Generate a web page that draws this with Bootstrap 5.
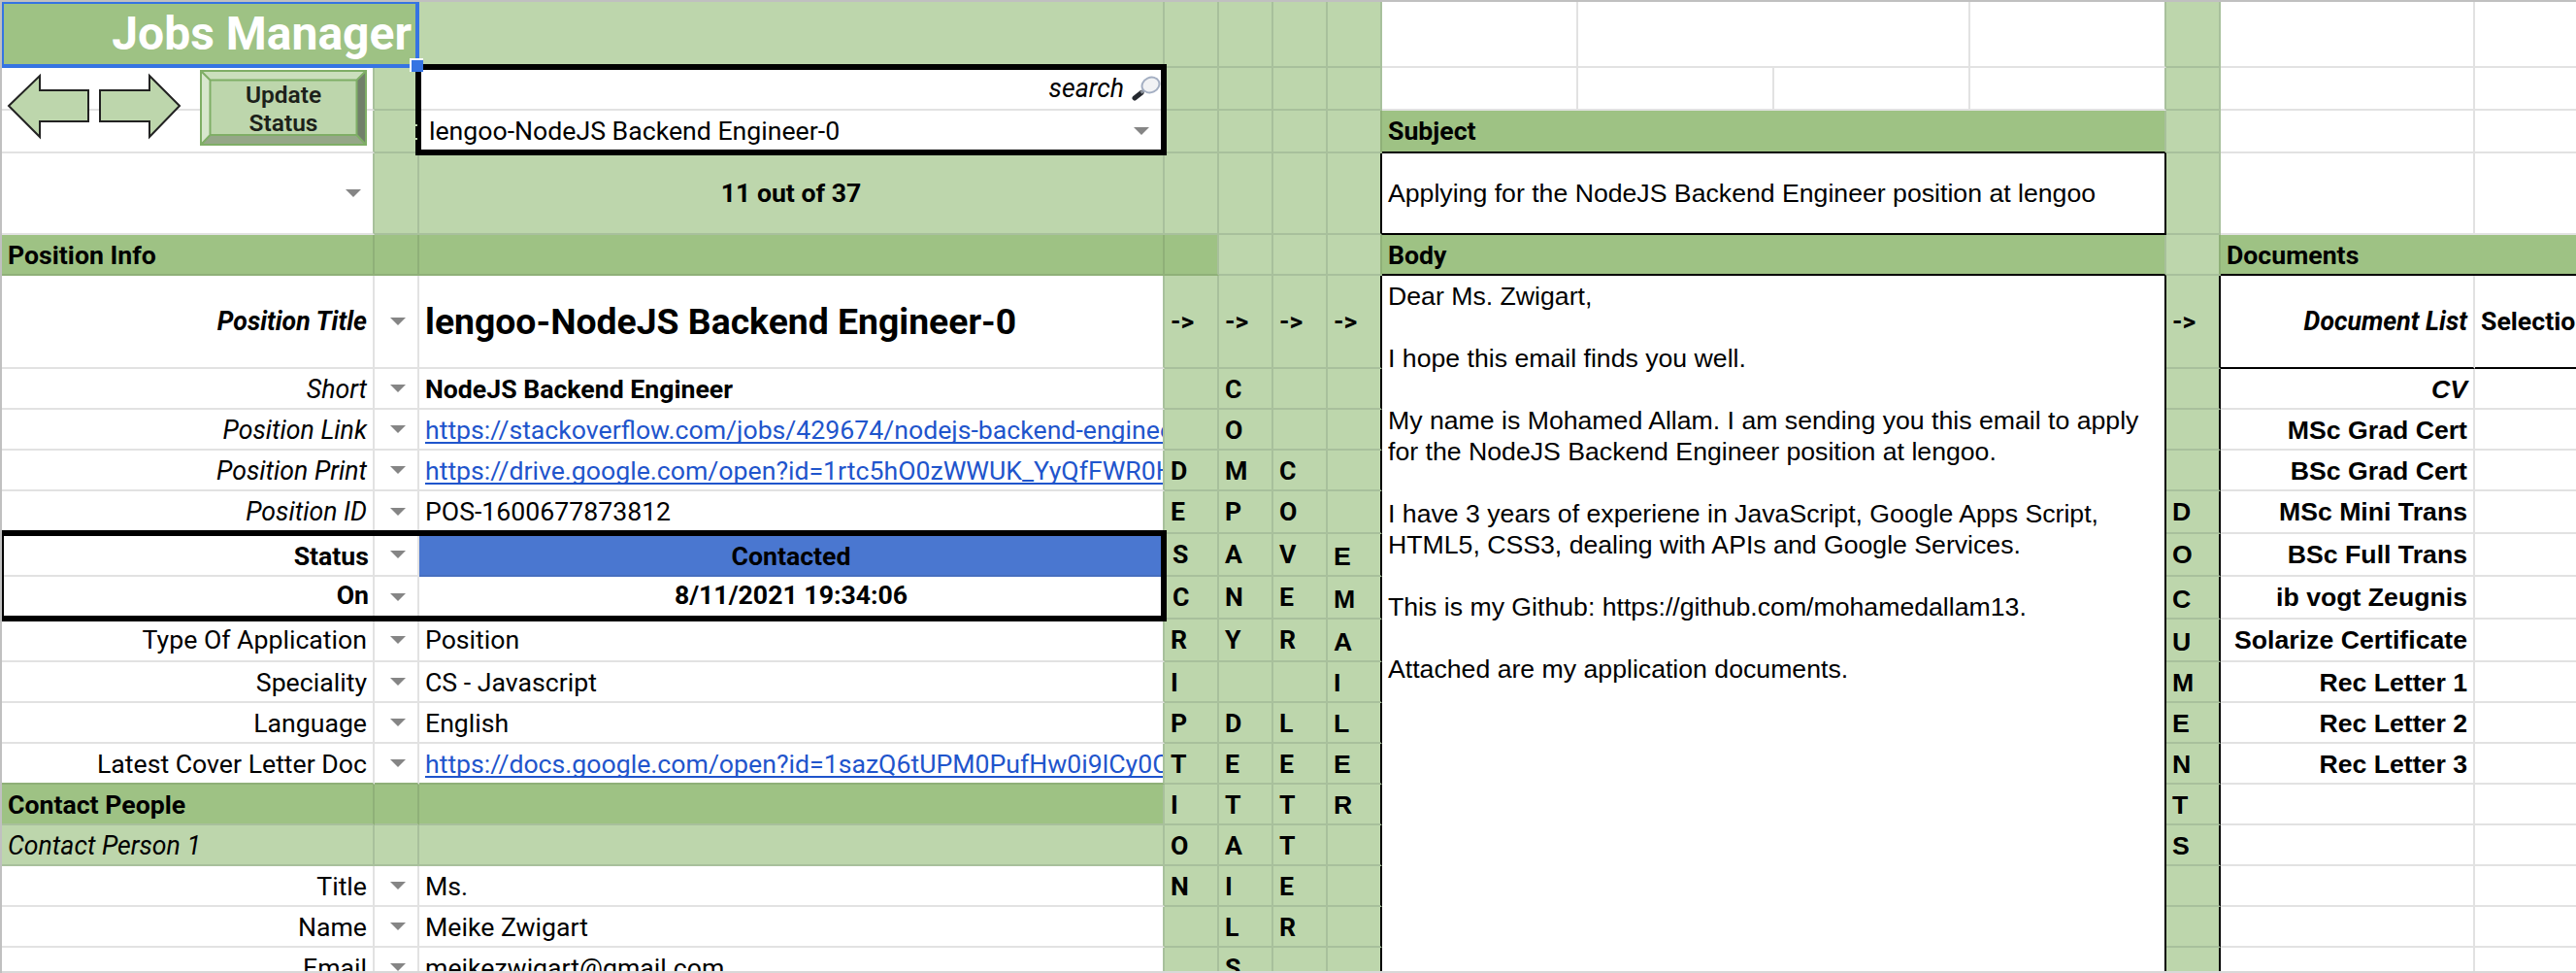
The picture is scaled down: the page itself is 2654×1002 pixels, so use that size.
<!DOCTYPE html>
<html lang="en">
<head>
<meta charset="utf-8">
<title>Jobs Manager</title>
<link href="https://cdn.jsdelivr.net/npm/bootstrap@5.3.0/dist/css/bootstrap.min.css" rel="stylesheet">
<script src="https://cdn.jsdelivr.net/npm/bootstrap@5.3.0/dist/js/bootstrap.bundle.min.js"></script>
<style>
:root{--lg:#bdd6ac;--lgl:#a8c09c;--dg:#9ec284;--dgl:#8fb078;--gl:#e2e2e2}
body{margin:0;background:#fff;color:#000;font-family:Roboto,sans-serif;font-size:26.67px;line-height:32px}
.sheet-wrap{width:2654px;height:1002px;border-top:2px solid #c0c0c0;border-left:2px solid #c0c0c0}
.sheet-wrap::after{content:"";position:absolute;left:0;right:0;bottom:0;height:2px;background:#d8d8d8}
.sheet{width:2654px;table-layout:fixed;border-collapse:separate;border-spacing:0}
.sheet td{padding:0 6px;height:0;border:0 solid var(--gl);border-width:0 2px 2px 0;vertical-align:middle;white-space:nowrap;overflow:hidden;background:#fff}
.sheet .r42 td{padding-top:2px}
.sheet td.l{background:var(--lg);border-color:var(--lgl)}
.sheet td.d{background:var(--dg);border-color:var(--dgl)}
.sheet td.rl{border-right-color:var(--lgl)}
.sheet td.rd{border-right-color:var(--dgl)}
.sheet td.rk{border-right-color:#000}
.sheet td.bl{border-bottom-color:var(--lgl)}
.sheet td.bd{border-bottom-color:var(--dgl)}
.sheet td.bk{border-bottom-color:#000}
.r42{height:42px}.r44{height:44px}.r68{height:68px}.r84{height:84px}.r96{height:96px}
.arial{font-family:"Liberation Sans",Arial,sans-serif}
.ttl{font-size:48px;line-height:56px;color:#fff}
.big{font-size:37.33px;line-height:44px}
.sheet td.pick{padding-right:12px;padding-top:0}
.tri{display:inline-block;width:0;height:0;border:8px solid transparent;border-top-color:#858585;border-bottom:0;vertical-align:middle;flex:none}
.pick .tri{display:block;margin-left:auto}
.lens{margin-right:-4px}
.sheet a{color:#1f55cc;text-decoration:underline;text-decoration-thickness:2px;text-underline-offset:3px;text-decoration-skip-ink:none}
.sheet td.status-fill{background:#4a77d0;border-bottom-color:#466fbf}
.sheet td.mail{vertical-align:top;padding-top:5px;white-space:pre-line}
.sheet td.px4{padding-right:4px}
.sheet td.px8{padding-left:8px}
.sheet td.dn{padding-top:3px}
.sheet td.up{padding-bottom:4px}
.frame{position:absolute;border:6px solid #000;pointer-events:none}
.f-search{left:428px;top:66px;width:774px;height:94px}
.f-status{left:2px;top:546px;width:1200px;height:94px;border-left-width:2px}
.sel{position:absolute;left:2px;top:2px;width:430px;height:68px;border:2px solid #3574e3;border-right-width:4px;border-bottom-width:4px}
.handle{position:absolute;left:422px;top:60px;width:14px;height:14px;background:#3574e3;border:2px solid #fff;border-width:2px 0 0 2px}
.draw{position:absolute;left:0;top:70px}
</style>
</head>
<body class="overflow-hidden">
<main class="sheet-wrap position-relative overflow-hidden">
<table class="sheet">
<colgroup><col style="width:384px"><col style="width:46px"><col style="width:768px"><col style="width:56px"><col style="width:56px"><col style="width:56px"><col style="width:56px"><col style="width:202px"><col style="width:202px"><col style="width:202px"><col style="width:202px"><col style="width:56px"><col style="width:262px"><col style="width:106px"></colgroup>
<tbody>
<tr class="r68"><td colspan="2" class="d ttl fw-bold text-end">Jobs Manager</td><td class="l"></td><td class="l"></td><td class="l"></td><td class="l"></td><td class="l"></td><td></td><td colspan="2"></td><td class="rl"></td><td class="l"></td><td></td><td></td></tr>
<tr class="r44"><td class="rl"></td><td class="l"></td><td><div class="d-flex justify-content-end align-items-center fst-italic">search<svg class="lens ms-2" width="30" height="26" viewBox="0 0 30 26"><path d="M3 23L10 17.500" stroke="#24282f" stroke-width="5" stroke-linecap="round"/><path d="M9.500 17.500L12.500 15" stroke="#8b919c" stroke-width="3"/><ellipse cx="19.500" cy="9.500" rx="9.200" ry="7.600" transform="rotate(-25 19.500 9.500)" fill="#f1f2f4" stroke="#a3aec2" stroke-width="2"/></svg></div></td><td class="l"></td><td class="l"></td><td class="l"></td><td class="l"></td><td></td><td></td><td></td><td class="rl"></td><td class="l"></td><td></td><td></td></tr>
<tr class="r44"><td class="rl"></td><td class="l"></td><td><div class="d-flex align-items-center justify-content-between ps-1 pe-2"><span>lengoo-NodeJS Backend Engineer-0</span><i class="tri"></i></div></td><td class="l"></td><td class="l"></td><td class="l"></td><td class="l rd"></td><td colspan="4" class="d fw-bold bk rl">Subject</td><td class="l"></td><td></td><td></td></tr>
<tr class="r84"><td class="rl pick"><i class="tri"></i></td><td class="l"></td><td class="l text-center fw-bold">11 out of 37</td><td class="l"></td><td class="l"></td><td class="l"></td><td class="l rk"></td><td colspan="4" class="arial bk rk">Applying for the NodeJS Backend Engineer position at lengoo</td><td class="l"></td><td></td><td></td></tr>
<tr class="r42"><td class="d fw-bold">Position Info</td><td class="d"></td><td class="d"></td><td class="d rl"></td><td class="l"></td><td class="l"></td><td class="l rd"></td><td colspan="4" class="d fw-bold bk rl">Body</td><td class="l rd"></td><td colspan="2" class="d fw-bold bk">Documents</td></tr>
<tr class="r96"><td class="text-end fw-bold fst-italic">Position Title</td><td class="pick"><i class="tri"></i></td><td class="rl big fw-bold">lengoo-NodeJS Backend Engineer-0</td><td class="l fw-bold">-&gt;</td><td class="l fw-bold">-&gt;</td><td class="l fw-bold">-&gt;</td><td class="l fw-bold rk">-&gt;</td><td colspan="4" rowspan="16" class="arial mail rk">Dear Ms. Zwigart,

I hope this email finds you well.

My name is Mohamed Allam. I am sending you this email to apply
for the NodeJS Backend Engineer position at lengoo.

I have 3 years of experiene in JavaScript, Google Apps Script,
HTML5, CSS3, dealing with APIs and Google Services.

This is my Github: https://github.com/mohamedallam13.

Attached are my application documents.</td><td class="l fw-bold rk">-&gt;</td><td class="text-end fw-bold fst-italic bk">Document List</td><td class="fw-bold bk">Selection</td></tr>
<tr class="r42"><td class="text-end fst-italic">Short</td><td class="pick"><i class="tri"></i></td><td class="rl fw-bold">NodeJS Backend Engineer</td><td class="l"></td><td class="l fw-bold">C</td><td class="l"></td><td class="l rk"></td><td class="l rk"></td><td class="arial text-end fw-bold fst-italic">CV</td><td></td></tr>
<tr class="r42"><td class="text-end fst-italic">Position Link</td><td class="pick"><i class="tri"></i></td><td class="rl"><a href="#">https://stackoverflow.com/jobs/429674/nodejs-backend-engineer</a></td><td class="l"></td><td class="l fw-bold">O</td><td class="l"></td><td class="l rk"></td><td class="l rk"></td><td class="arial text-end fw-bold">MSc Grad Cert</td><td></td></tr>
<tr class="r42"><td class="text-end fst-italic">Position Print</td><td class="pick"><i class="tri"></i></td><td class="rl"><a href="#">https://drive.google.com/open?id=1rtc5hO0zWWUK_YyQfFWR0H</a></td><td class="l fw-bold">D</td><td class="l fw-bold">M</td><td class="l fw-bold">C</td><td class="l rk"></td><td class="l rk"></td><td class="arial text-end fw-bold">BSc Grad Cert</td><td></td></tr>
<tr class="r44"><td class="text-end fst-italic">Position ID</td><td class="pick"><i class="tri"></i></td><td class="rl">POS-1600677873812</td><td class="l fw-bold">E</td><td class="l fw-bold">P</td><td class="l fw-bold">O</td><td class="l rk"></td><td class="l rk arial fw-bold">D</td><td class="arial text-end fw-bold">MSc Mini Trans</td><td></td></tr>
<tr class="r44"><td class="text-end fw-bold px4 dn">Status</td><td class="pick"><i class="tri"></i></td><td class="rl text-center fw-bold status-fill dn">Contacted</td><td class="l fw-bold px8">S</td><td class="l fw-bold">A</td><td class="l fw-bold">V</td><td class="l rk arial fw-bold dn">E</td><td class="l rk arial fw-bold">O</td><td class="arial text-end fw-bold">BSc Full Trans</td><td></td></tr>
<tr class="r44"><td class="text-end fw-bold px4 up">On</td><td class="pick"><i class="tri"></i></td><td class="rl text-center fw-bold up">8/11/2021 19:34:06</td><td class="l fw-bold px8">C</td><td class="l fw-bold">N</td><td class="l fw-bold">E</td><td class="l rk arial fw-bold dn">M</td><td class="l rk arial fw-bold dn">C</td><td class="arial text-end fw-bold">ib vogt Zeugnis</td><td></td></tr>
<tr class="r44"><td class="text-end">Type Of Application</td><td class="pick"><i class="tri"></i></td><td class="rl">Position</td><td class="l fw-bold">R</td><td class="l fw-bold">Y</td><td class="l fw-bold">R</td><td class="l rk arial fw-bold dn">A</td><td class="l rk arial fw-bold dn">U</td><td class="arial text-end fw-bold">Solarize Certificate</td><td></td></tr>
<tr class="r42"><td class="text-end">Speciality</td><td class="pick"><i class="tri"></i></td><td class="rl">CS - Javascript</td><td class="l fw-bold">I</td><td class="l"></td><td class="l"></td><td class="l rk arial fw-bold">I</td><td class="l rk arial fw-bold">M</td><td class="arial text-end fw-bold">Rec Letter 1</td><td></td></tr>
<tr class="r42"><td class="text-end">Language</td><td class="pick"><i class="tri"></i></td><td class="rl">English</td><td class="l fw-bold">P</td><td class="l fw-bold">D</td><td class="l fw-bold">L</td><td class="l rk arial fw-bold">L</td><td class="l rk arial fw-bold">E</td><td class="arial text-end fw-bold">Rec Letter 2</td><td></td></tr>
<tr class="r42"><td class="text-end bd">Latest Cover Letter Doc</td><td class="pick bd"><i class="tri"></i></td><td class="rl bd"><a href="#">https://docs.google.com/open?id=1sazQ6tUPM0PufHw0i9lCy0C</a></td><td class="l fw-bold">T</td><td class="l fw-bold">E</td><td class="l fw-bold">E</td><td class="l rk arial fw-bold">E</td><td class="l rk arial fw-bold">N</td><td class="arial text-end fw-bold">Rec Letter 3</td><td></td></tr>
<tr class="r42"><td class="d fw-bold bl">Contact People</td><td class="d bl"></td><td class="d rl bl"></td><td class="l fw-bold">I</td><td class="l fw-bold">T</td><td class="l fw-bold">T</td><td class="l rk arial fw-bold">R</td><td class="l rk arial fw-bold">T</td><td></td><td></td></tr>
<tr class="r42"><td class="l fst-italic">Contact Person 1</td><td class="l"></td><td class="l"></td><td class="l fw-bold">O</td><td class="l fw-bold">A</td><td class="l fw-bold">T</td><td class="l rk"></td><td class="l rk arial fw-bold">S</td><td></td><td></td></tr>
<tr class="r42"><td class="text-end">Title</td><td class="pick"><i class="tri"></i></td><td class="rl">Ms.</td><td class="l fw-bold">N</td><td class="l fw-bold">I</td><td class="l fw-bold">E</td><td class="l rk"></td><td class="l rk"></td><td></td><td></td></tr>
<tr class="r42"><td class="text-end">Name</td><td class="pick"><i class="tri"></i></td><td class="rl">Meike Zwigart</td><td class="l"></td><td class="l fw-bold">L</td><td class="l fw-bold">R</td><td class="l rk"></td><td class="l rk"></td><td></td><td></td></tr>
<tr class="r42"><td class="text-end">Email</td><td class="pick"><i class="tri"></i></td><td class="rl">meikezwigart@gmail.com</td><td class="l"></td><td class="l fw-bold">S</td><td class="l"></td><td class="l rk"></td><td class="l rk"></td><td></td><td></td></tr>
</tbody>
</table>
</main>
<div class="frame f-search"></div>
<div class="frame f-status"></div>
<div class="sel"></div><div class="handle"></div>
<svg class="draw" width="432" height="84" viewBox="0 70 432 84">
<g fill="#bdd6ac" stroke="#222" stroke-width="2"><path d="M9 109L41 78V93H91V125H41V141Z"/><path d="M185 109L154 78V93H103V125H154V141Z"/></g>
<path d="M206 72H378V150H206Z" fill="#bdd6ac"/>
<path d="M206 72H378L368 82H216Z" fill="#cbdfbd"/><path d="M206 72L216 82V139L206 150Z" fill="#d8e7ce"/>
<path d="M378 72V150L368 139V82Z" fill="#71806a"/><path d="M206 150L216 139H368L378 150Z" fill="#95a788"/>
<path d="M207 73H377V149H207ZM216.500 82.500H367.500V139H216.500ZM207 73L216.500 82.500M377 73L367.500 82.500M207 149L216.500 139M377 149L367.500 139" fill="none" stroke="#7fae66" stroke-width="2"/>
<path d="M428 128H430V130H428ZM428 142H430V144H428Z" fill="#bdd6ac"/>
<g font-family="Roboto,sans-serif" font-size="24.500" font-weight="600" fill="#1c211a" text-anchor="middle"><text x="292" y="106">Update</text><text x="292" y="135">Status</text></g>
</svg>
</body>
</html>
